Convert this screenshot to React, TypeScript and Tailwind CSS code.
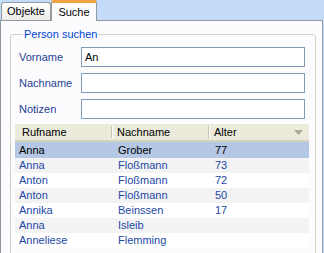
import React from "react";

const rows = [
  { ruf: "Anna", nach: "Grober", alter: "77" },
  { ruf: "Anna", nach: "Floßmann", alter: "73" },
  { ruf: "Anton", nach: "Floßmann", alter: "72" },
  { ruf: "Anton", nach: "Floßmann", alter: "50" },
  { ruf: "Annika", nach: "Beinssen", alter: "17" },
  { ruf: "Anna", nach: "Isleib", alter: "" },
  { ruf: "Anneliese", nach: "Flemming", alter: "" },
];

const fields = [
  { label: "Vorname", value: "An" },
  { label: "Nachname", value: "" },
  { label: "Notizen", value: "" },
];

const HeaderSep = () => (
  <div className="flex h-[12px] self-center">
    <div className="w-px bg-[#c7c5b2]" />
    <div className="w-px bg-white" />
  </div>
);

const App = () => {
  return (
    <div className="w-[324px] h-[253px] overflow-hidden bg-[#c4dbf9] flex flex-col font-['Liberation_Sans',Arial,sans-serif] text-[11px] text-black">
      <div className="flex items-end h-[20px] pl-[1px]">
        <div className="w-[50px] h-[18px] border border-b-0 border-[#919b9c] rounded-t-[3px] bg-gradient-to-b from-white to-[#ecebe6] flex items-center justify-center leading-none">
          Objekte
        </div>
        <div className="relative z-10 -mb-px w-[46px] h-[21px] border-x border-[#919b9c] border-t-[3px] border-t-[#f2a23c] rounded-t-[3px] bg-[#fcfcfe] flex items-center justify-center leading-none">
          Suche
        </div>
      </div>
      <div className="flex-1 w-[323px] bg-[#fcfcfe] border border-b-0 border-[#919b9c] pt-[7px] pl-[9px] pr-[6px]">
        <fieldset className="w-[306px] h-[240px] border border-[#d0d0bf] rounded-[3px] pl-[4px] pr-[5px]">
          <legend className="ml-[8px] px-[1px] leading-[13px] text-[#0046d5]">Person suchen</legend>
          <div className="flex flex-col gap-[6px] mt-[6px]">
            {fields.map((f) => (
              <div key={f.label} className="flex items-center">
                <div className="w-[66px] pl-[4px] text-[#1f3e96]">{f.label}</div>
                <div className="w-[224px] h-[20px] border border-[#7f9db9] bg-white flex items-center pl-[3px]">
                  {f.value}
                </div>
              </div>
            ))}
          </div>
          <div className="mt-[5px] w-[294px]">
            <div className="flex h-[18px] bg-[#ebeadb] border-b-2 border-[#d6d2c2]">
              <div className="w-[96px] pl-[7px] flex items-center">Rufname</div>
              <HeaderSep />
              <div className="w-[95px] pl-[4px] flex items-center">Nachname</div>
              <HeaderSep />
              <div className="flex-1 pl-[4px] flex items-center justify-between pr-[6px]">
                <span>Alter</span>
                <svg width="9" height="5" viewBox="0 0 9 5">
                  <path d="M0 0H9L4.5 5Z" fill="#aca899" />
                </svg>
              </div>
            </div>
            {rows.map((r, i) => (
              <div
                key={i}
                className={
                  i === 0
                    ? "flex items-center h-[16px] bg-[#b4c7e4] text-black"
                    : i % 2 === 0
                    ? "flex items-center h-[15px] bg-white text-[#1c47a6]"
                    : "flex items-center h-[15px] bg-[#f3f3f3] text-[#1c47a6]"
                }
              >
                <div className="w-[98px] pl-[4px]">{r.ruf}</div>
                <div className="w-[97px] pl-[5px]">{r.nach}</div>
                <div className="flex-1 pl-[5px]">{r.alter}</div>
              </div>
            ))}
          </div>
        </fieldset>
      </div>
    </div>
  );
};

export default App;
